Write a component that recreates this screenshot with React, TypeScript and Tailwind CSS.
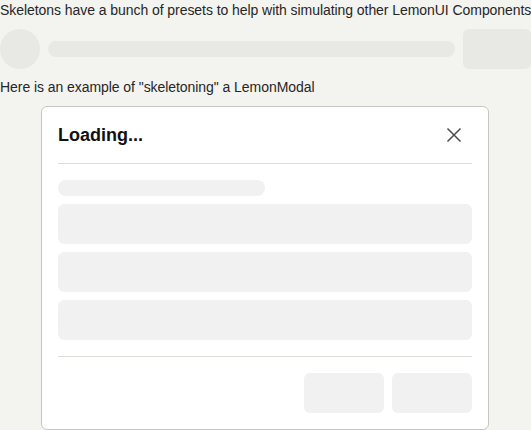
import React from "react";

export default function App() {
  return (
    <div
      className="min-h-[430px] bg-[#f3f3ef] text-[14px] leading-[21px] tracking-[-0.06px] text-[#262626] flex flex-col gap-2 overflow-hidden"
      style={{ fontFamily: '"Liberation Sans", Arial, sans-serif' }}
    >
      <p className="whitespace-nowrap">
        Skeletons have a bunch of presets to help with simulating other LemonUI Components
      </p>
      <div className="flex items-center gap-2">
        <div className="w-10 h-10 rounded-full bg-[#e8e8e5] shrink-0" />
        <div className="flex-1 h-4 rounded-full bg-[#e8e8e5]" />
        <div className="w-[68px] h-10 rounded-md bg-[#e8e8e5] shrink-0" />
      </div>
      <p className="whitespace-nowrap">Here is an example of "skeletoning" a LemonModal</p>
      <div className="ml-[41px] w-[448px] bg-white border border-[#c6c6c3] rounded-md shrink-0">
        <div className="px-4">
          <div className="flex items-center justify-between py-4">
            <h3 className="text-[18px] leading-6 font-bold tracking-normal text-[#111]">
              Loading...
            </h3>
            <svg width="16" height="16" viewBox="0 0 16 16" className="mr-[10px]">
              <path d="M1.5 1.5 L14.5 14.5 M14.5 1.5 L1.5 14.5" stroke="#4b4b4b" strokeWidth="1.5" fill="none" />
            </svg>
          </div>
          <div className="h-px bg-[#deded9]" />
          <div className="flex flex-col gap-2 py-4">
            <div className="w-[207px] h-4 rounded-full bg-[#f1f1f1]" />
            <div className="h-10 rounded-md bg-[#f1f1f1]" />
            <div className="h-10 rounded-md bg-[#f1f1f1]" />
            <div className="h-10 rounded-md bg-[#f1f1f1]" />
          </div>
          <div className="h-px bg-[#deded9]" />
          <div className="flex justify-end gap-2 py-4">
            <div className="w-20 h-10 rounded-md bg-[#f1f1f1]" />
            <div className="w-20 h-10 rounded-md bg-[#f1f1f1]" />
          </div>
        </div>
      </div>
    </div>
  );
}
